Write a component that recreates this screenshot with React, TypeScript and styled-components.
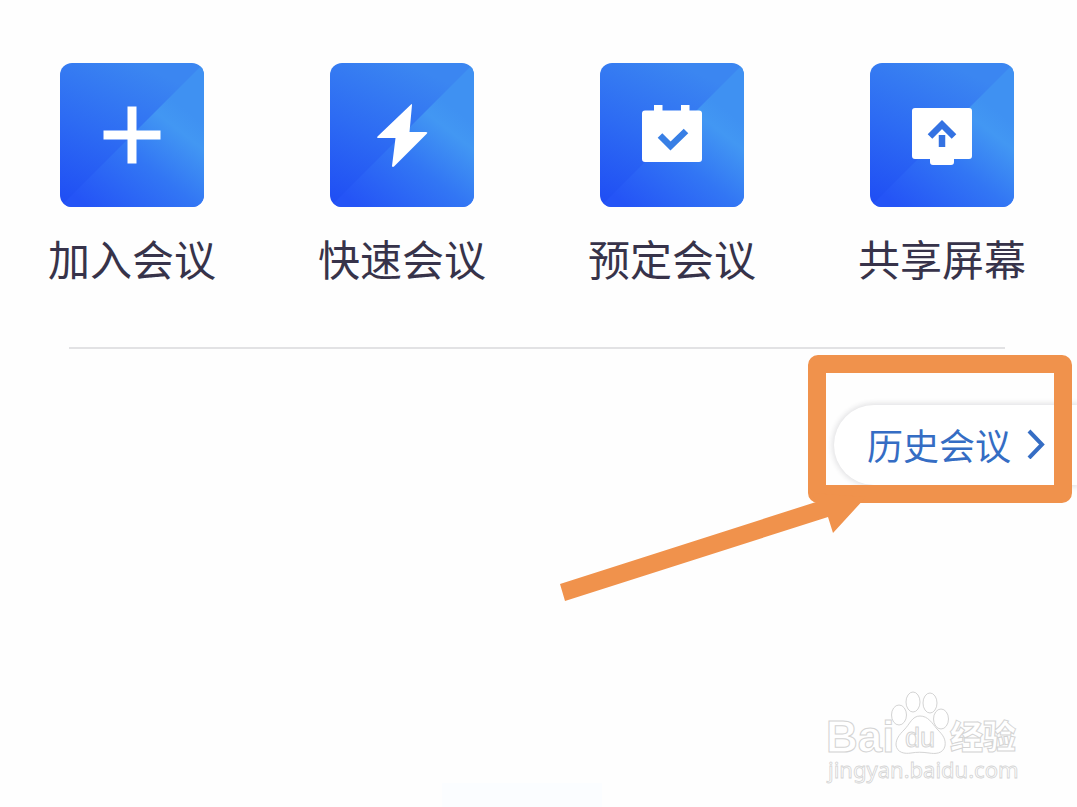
import React from "react";
import styled, { createGlobalStyle } from "styled-components";

const Global = createGlobalStyle`
  *, *::before, *::after { box-sizing: border-box; }
  body {
    margin: 0;
    background: #fefefe;
    font-family: "Noto Sans CJK SC", sans-serif;
  }
`;

const Page = styled.main`
  position: relative;
  display: flex;
  flex-direction: column;
  min-height: 100vh;
  overflow: hidden;
`;

const Actions = styled.nav`
  display: flex;
  justify-content: space-between;
  padding: 63px 51px 0 48px;
`;

const Action = styled.button`
  display: flex;
  flex-direction: column;
  align-items: center;
  gap: 21px;
  padding: 0;
  border: 0;
  background: none;
  color: #37334a;
  font-family: inherit;
  font-size: 42px;
  line-height: 60px;
  white-space: nowrap;
  cursor: pointer;
`;

const Tile = styled.svg`
  display: block;
  width: 144px;
  height: 144px;
  border-radius: 12px;
`;

const Divider = styled.hr`
  align-self: stretch;
  height: 2px;
  margin: 59px 72px 0 69px;
  border: 0;
  background: #e2e2e4;
`;

const HistoryRow = styled.section`
  display: flex;
  justify-content: flex-end;
  padding-top: 56px;
`;

const HistoryAnchor = styled.div`
  position: relative;
`;

const HistoryButton = styled.button`
  display: flex;
  align-items: center;
  gap: 16px;
  height: 80px;
  padding: 0 32px 2px 33px;
  border: 0;
  border-radius: 40px 0 0 40px;
  background: #fff;
  box-shadow: 0 0 5px 2px rgba(40, 40, 60, 0.12);
  color: #356dc4;
  font-family: inherit;
  font-size: 36px;
  line-height: 52px;
  white-space: nowrap;
  cursor: pointer;
`;

const Highlight = styled.div`
  position: absolute;
  top: -50px;
  right: 5px;
  width: 264px;
  height: 148px;
  border: 18px solid #f0924c;
  border-radius: 10px;
  pointer-events: none;
`;

const Arrow = styled.svg`
  position: absolute;
  top: 80px;
  right: 207px;
  width: 310px;
  height: 120px;
  pointer-events: none;
`;

const Footer = styled.footer`
  display: flex;
  justify-content: flex-end;
  margin-top: auto;
  padding: 0 47px 17px 0;
`;

const Watermark = styled.svg`
  display: block;
  width: 210px;
  height: 100px;
`;

const Glow = styled.div`
  position: absolute;
  left: 41%;
  bottom: 0;
  width: 160px;
  height: 24px;
  background: #fbfdff;
`;

const joinIcon = <path d="M67.500 43.500h9v24h24v9h-24v24h-9v-24h-24v-9h24z" fill="#fff" />;

const quickIcon = (
  <path
    d="M81 41.500 47.500 73.500q-1 1.500 1 1.500h17l-3.500 28q.5 1.500 2 .5l33-33q1-1.500-1-1.500H79.500l2.500-27q0-1.500-1-.5z"
    fill="#fff"
  />
);

const scheduleIcon = (
  <>
    <path
      d="M54 42h8.500v5.500h18.500V42h8.500v5.500H99q3 0 3 3V96q0 3-3 3H45q-3 0-3-3V50.500q0-3 3-3h9z"
      fill="#fff"
    />
    <path d="m60 72.500 10.500 10.500L86 68" fill="none" stroke="#387fe5" strokeWidth="6.500" />
  </>
);

const shareIcon = (
  <>
    <path
      d="M45 45h54q3 0 3 3v45q0 3-3 3H84v3q0 3-3 3H63q-3 0-3-3v-3H45q-3 0-3-3V48q0-3 3-3z"
      fill="#fff"
    />
    <path d="m60 73.500 12-12 12 12M72 72v12" fill="none" stroke="#3472e2" strokeWidth="6.500" />
  </>
);

const actions = [
  { id: "join", label: "加入会议", icon: joinIcon },
  { id: "quick", label: "快速会议", icon: quickIcon },
  { id: "schedule", label: "预定会议", icon: scheduleIcon },
  { id: "share", label: "共享屏幕", icon: shareIcon },
];

function ActionTile({ id, children }: { id: string; children: React.ReactNode }) {
  return (
    <Tile viewBox="0 0 144 144" aria-hidden="true">
      <defs>
        <linearGradient id={`${id}-base`} gradientUnits="userSpaceOnUse" x1="8" y1="144" x2="76" y2="0">
          <stop offset="0" stopColor="#1f4df4" />
          <stop offset="0.5" stopColor="#2d6bf3" />
          <stop offset="1" stopColor="#3b86f1" />
        </linearGradient>
        <linearGradient id={`${id}-fold`} gradientUnits="userSpaceOnUse" x1="28" y1="144" x2="112" y2="36">
          <stop offset="0" stopColor="#2454f6" />
          <stop offset="0.5" stopColor="#3276f4" />
          <stop offset="0.850" stopColor="#4297f3" />
          <stop offset="1" stopColor="#3f91f2" />
        </linearGradient>
      </defs>
      <rect width="144" height="144" fill={`url(#${id}-base)`} />
      <path d="M144 0v144H0z" fill={`url(#${id}-fold)`} />
      {children}
    </Tile>
  );
}

export default function App() {
  return (
    <>
      <Global />
      <Page>
        <Actions>
          {actions.map(({ id, label, icon }) => (
            <Action key={id} type="button">
              <ActionTile id={id}>{icon}</ActionTile>
              {label}
            </Action>
          ))}
        </Actions>
        <Divider />
        <HistoryRow>
          <HistoryAnchor>
            <HistoryButton type="button">
              历史会议
              <svg width="18" height="30" viewBox="0 0 18 30" fill="none" aria-hidden="true">
                <path d="m2 2 13 13.500L2 29" stroke="#356dc4" strokeWidth="4" />
              </svg>
            </HistoryButton>
            <Highlight />
            <Arrow viewBox="0 0 310 120" aria-hidden="true">
              <path d="m0 99 256-82-4-9 54 4-33 36-5-16L5 116z" fill="#f0924c" />
            </Arrow>
          </HistoryAnchor>
        </HistoryRow>
        <Glow />
        <Footer>
          <Watermark viewBox="0 0 210 100" fill="#fff" stroke="#d4d4d4" strokeWidth="1">
            <text x="6" y="62" fontFamily='"Liberation Sans", sans-serif' fontWeight="700" fontSize="44">Bai</text>
            <ellipse cx="79" cy="25" rx="7.500" ry="10" />
            <ellipse cx="93" cy="12" rx="7" ry="10" />
            <ellipse cx="110" cy="13" rx="7" ry="10" />
            <ellipse cx="121" cy="29" rx="7.500" ry="10" />
            <path d="M100 26c8 0 12 7 17 13 6 6 9 10 8 17-2 8-10 8-16 7-7-1-12-1-18 0-6 1-14 0-15-8 0-6 3-10 8-15 6-6 8-14 16-14z" />
            <text x="85" y="57" fontFamily='"Liberation Sans", sans-serif' fontSize="27">du</text>
            <text x="130" y="59" fontFamily='"Noto Sans CJK SC", sans-serif' fontWeight="900" fontSize="33">经验</text>
            <text x="8" y="88" fontFamily='"Noto Sans", sans-serif' fontSize="22" strokeWidth="0.800">jingyan.baidu.com</text>
          </Watermark>
        </Footer>
      </Page>
    </>
  );
}
